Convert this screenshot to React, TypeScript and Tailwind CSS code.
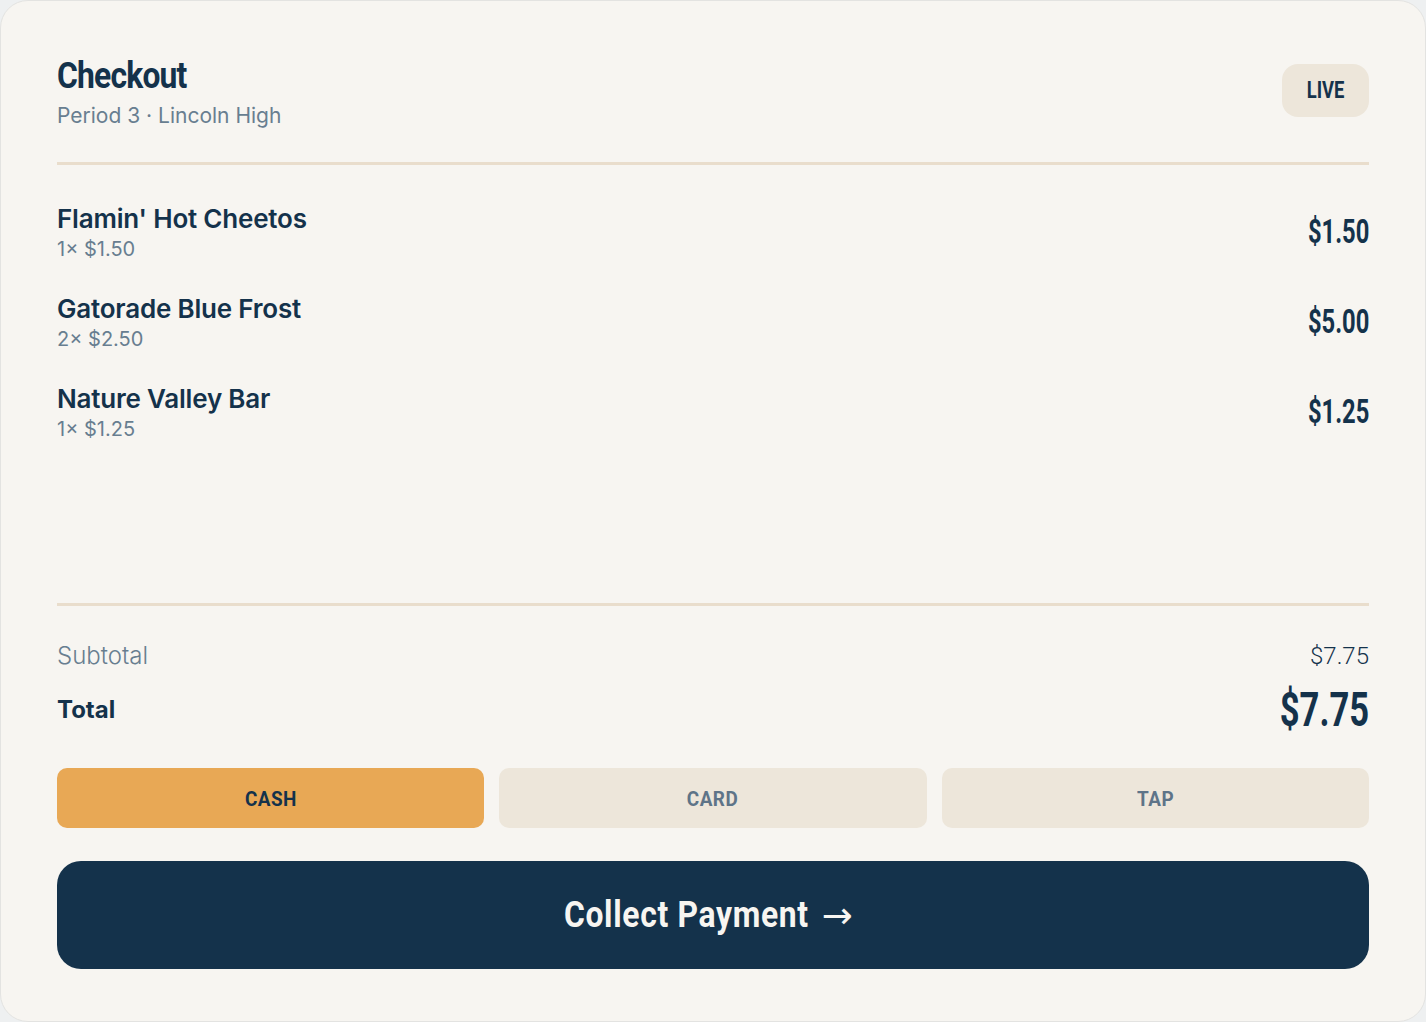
const navy = 'text-[#14324b]';

const items = [
  { name: "Flamin' Hot Cheetos", qty: '1× $1.50', total: '$1.50' },
  { name: 'Gatorade Blue Frost', qty: '2× $2.50', total: '$5.00' },
  { name: 'Nature Valley Bar', qty: '1× $1.25', total: '$1.25' },
];

// no condensed face installed: squeeze Roboto bold instead
const cond = "inline-block font-['Roboto',sans-serif] font-bold";

export default function App() {
  return (
    <div className="h-screen bg-[#eef0f1] font-['Inter',sans-serif]">
      <div className="flex h-full flex-col rounded-[28px] border border-[#e3e3e1] bg-[#f7f5f1] px-14 pb-[52px] pt-[54px]">
        <header className="flex items-start justify-between">
          <div>
            <h1 className={`${cond} origin-left scale-x-[0.86] text-[37px] leading-[42px] tracking-tight ${navy}`}>Checkout</h1>
            <p className="mt-[5px] text-[21px] leading-7 text-[#687e90]">Period 3 · Lincoln High</p>
          </div>
          <span className="mt-[9px] flex h-[53px] w-[87px] items-center justify-center rounded-2xl bg-[#ede6da]">
            <span className={`${cond} mt-[2px] scale-x-[0.8] text-[23px] ${navy}`}>LIVE</span>
          </span>
        </header>

        <div className="mt-[32px] h-[3px] bg-[#e9ddcc]" />

        <ul className="mt-[37px] flex flex-1 flex-col gap-[30px]">
          {items.map((item) => (
            <li key={item.name} className="flex items-center justify-between">
              <div>
                <p className={`text-[26px] font-semibold leading-[34px] tracking-[-0.2px] ${navy}`}>{item.name}</p>
                <p className="text-[20px] leading-[26px] text-[#687e90]">{item.qty}</p>
              </div>
              <span className={`${cond} origin-right scale-x-[0.72] text-[33px] ${navy}`}>{item.total}</span>
            </li>
          ))}
        </ul>

        <div className="h-[3px] bg-[#e9ddcc]" />

        <div className="mt-[34px] flex items-center justify-between text-[24px] leading-8">
          <span className="font-light text-[#687e90]">Subtotal</span>
          <span className={`font-['Roboto',sans-serif] font-light ${navy}`}>$7.75</span>
        </div>
        <div className="mt-[10px] flex items-center justify-between">
          <span className={`text-[24px] font-bold ${navy}`}>Total</span>
          <span className={`${cond} origin-right scale-x-[0.72] text-[48px] leading-[56px] ${navy}`}>$7.75</span>
        </div>

        <div className="mt-[30px] grid grid-cols-3 gap-[15px]">
          <button className="h-[60px] rounded-[10px] bg-[#e8a855]">
            <span className={`${cond} mt-[3px] scale-x-[0.9] text-[21px] tracking-wide ${navy}`}>CASH</span>
          </button>
          <button className="h-[60px] rounded-[10px] bg-[#ede6da]">
            <span className={`${cond} mt-[3px] scale-x-[0.9] text-[21px] tracking-wide text-[#5e7488]`}>CARD</span>
          </button>
          <button className="h-[60px] rounded-[10px] bg-[#ede6da]">
            <span className={`${cond} mt-[3px] scale-x-[0.9] text-[21px] tracking-wide text-[#5e7488]`}>TAP</span>
          </button>
        </div>

        <button className="mt-[33px] flex h-[108px] items-center justify-center rounded-[24px] bg-[#14324b] text-[#f7f5f1]">
          <span className={`${cond} scale-x-[0.86] text-[37px] tracking-[0.8px]`}>Collect Payment</span>
          <span className="-ml-[7px] mr-[29px] font-['DejaVu_Sans',sans-serif] text-[37px] leading-none">→</span>
        </button>
      </div>
    </div>
  );
}
